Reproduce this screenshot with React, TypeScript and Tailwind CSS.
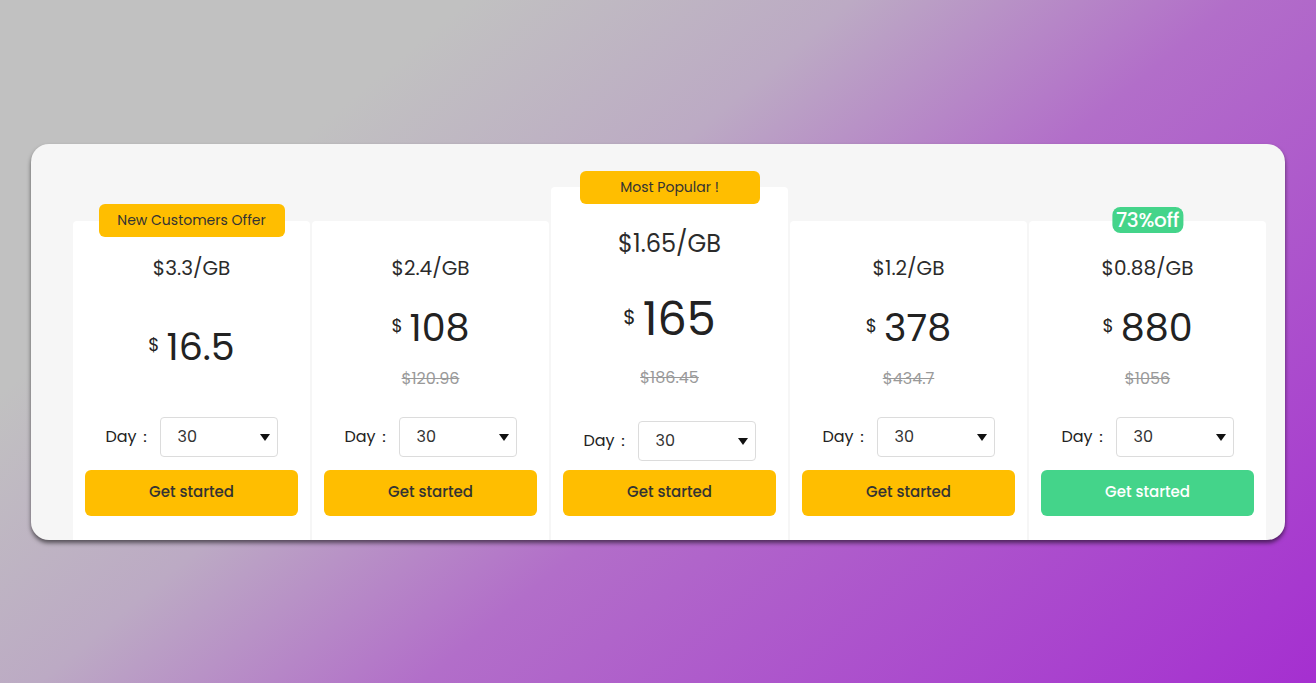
import { useState } from "react";

interface Plan {
  perGb: string;
  price: string;
  old?: string;
  badge?: "new" | "popular" | "off";
  green?: boolean;
  featured?: boolean;
}

const plans: Plan[] = [
  { perGb: "$3.3/GB", price: "16.5", badge: "new" },
  { perGb: "$2.4/GB", price: "108", old: "$120.96" },
  { perGb: "$1.65/GB", price: "165", old: "$186.45", badge: "popular", featured: true },
  { perGb: "$1.2/GB", price: "378", old: "$434.7" },
  { perGb: "$0.88/GB", price: "880", old: "$1056", badge: "off", green: true },
];

function DaySelect() {
  const [day, setDay] = useState("30");
  return (
    <div className="flex items-center justify-center gap-[7px]">
      <span className="text-[16px] text-[#222]">Day：</span>
      <div className="relative w-[118px] h-[40px]">
        <select
          value={day}
          onChange={(e) => setDay(e.target.value)}
          className="w-full h-full appearance-none rounded-[4px] border border-[#dcdcdc] bg-white pl-[17px] text-[16px] text-[#333] outline-none"
        >
          <option value="30">30</option>
          <option value="60">60</option>
          <option value="90">90</option>
        </select>
        {/* arrow */}
        <svg className="pointer-events-none absolute right-[8px] top-[17px] w-[10px] h-[7px]" viewBox="0 0 10 7">
          <path d="M0 0h10L5 7z" fill="#111" />
        </svg>
      </div>
    </div>
  );
}

function PlanCard({ plan }: { plan: Plan }) {
  const f = plan.featured;
  return (
    <div
      className={`relative w-[237px] shrink-0 rounded-t-[4px] bg-white flex flex-col items-center ${
        f ? "mt-[43px] h-[360px] pt-[41px]" : "mt-[77px] h-[330px] pt-[33px]"
      }`}
    >
      {plan.badge === "new" && (
        <div className="absolute top-[-17px] left-1/2 -translate-x-1/2 h-[33px] w-[186px] rounded-[6px] bg-[#ffbe00] flex items-center justify-center text-[14px] text-[#333]">
          New Customers Offer
        </div>
      )}
      {plan.badge === "popular" && (
        <div className="absolute top-[-16px] left-1/2 -translate-x-1/2 h-[33px] w-[180px] rounded-[6px] bg-[#ffbe00] flex items-center justify-center text-[14px] text-[#333]">
          Most Popular !
        </div>
      )}
      {plan.badge === "off" && (
        <div className="absolute top-[-14px] left-1/2 -translate-x-1/2 h-[26px] px-[4px] rounded-[8px] bg-[#44d48a] flex items-center justify-center text-[20px] font-medium tracking-[-0.3px] text-white">
          73%off
        </div>
      )}

      <div className={`${f ? "text-[24px] leading-[32px]" : "text-[20px] leading-[28px]"} text-[#2b2b2b]`}>
        {plan.perGb}
      </div>

      <div
        className={`flex flex-col items-center justify-center ${
          f ? "h-[135px] pt-[24px]" : "h-[122px] pt-[8px]"
        }`}
      >
        <div className="flex items-center gap-[7px] text-[#222]">
          <span className={`${f ? "text-[20px]" : "text-[18px]"} -mt-[4px]`}>$</span>
          <span className={`${f ? "text-[46px] leading-[56px]" : "text-[38px] leading-[46px]"}`}>
            {plan.price}
          </span>
        </div>
        {plan.old && (
          <div className={`${f ? "mt-[21px]" : "mt-[18px]"} text-[16px] leading-[20px] text-[#9a9a9a] line-through`}>
            {plan.old}
          </div>
        )}
      </div>

      <div className={f ? "mt-[26px]" : "mt-[13px]"}>
        <DaySelect />
      </div>

      <button
        className={`${f ? "mt-[9px]" : "mt-[13px]"} w-[213px] h-[46px] rounded-[6px] text-[15px] font-medium ${
          plan.green ? "bg-[#44d48a] text-white" : "bg-[#ffbe00] text-[#333]"
        }`}
      >
        Get started
      </button>
    </div>
  );
}

export default function App() {
  return (
    <div className="min-h-[683px] w-full flex items-center justify-center px-[31px] bg-[linear-gradient(140deg,#c1c1c1_22%,#bcaac4_40%,#b26ec9_58%,#a52fd0_100%)] font-['Poppins','Inter',sans-serif]">
      <div className="w-full h-[396px] rounded-[18px] bg-[#f6f6f6] shadow-[0_3px_4px_rgba(0,0,0,0.55)] overflow-hidden">
        <div className="flex items-start gap-[2px] pl-[42px]">
          {plans.map((p) => (
            <PlanCard key={p.perGb} plan={p} />
          ))}
        </div>
      </div>
    </div>
  );
}
